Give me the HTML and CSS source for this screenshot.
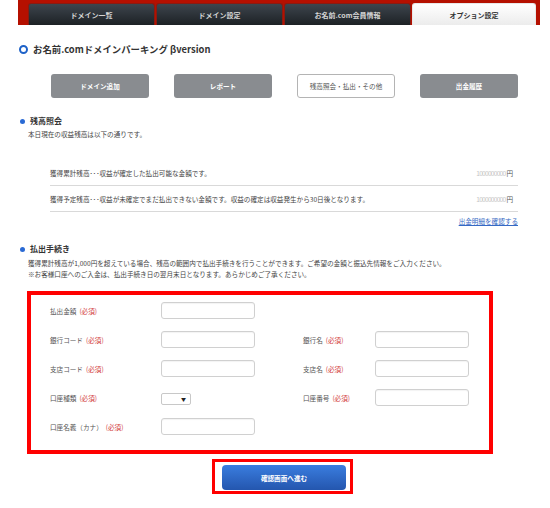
FILE: index.html
```html
<!DOCTYPE html>
<html lang="ja">
<head>
<meta charset="utf-8">
<title>お名前.comドメインパーキング</title>
<link rel="stylesheet" href="styles.css">
</head>
<body>
<div class="page">
  <div class="header">
    <nav class="tabs">
      <div class="tab">ドメイン一覧</div>
      <div class="tab">ドメイン設定</div>
      <div class="tab">お名前.com会員情報</div>
      <div class="tab active">オプション設定</div>
    </nav>
  </div>

  <h1 class="title"><span class="ring"></span>お名前.comドメインパーキング βversion</h1>

  <div class="subnav">
    <a class="sbtn">ドメイン追加</a>
    <a class="sbtn">レポート</a>
    <a class="sbtn current">残高照会・払出・その他</a>
    <a class="sbtn">出金履歴</a>
  </div>

  <section class="sec">
    <h2 class="sec-h"><span class="dot"></span>残高照会</h2>
    <p class="desc">本日現在の収益残高は以下の通りです。</p>
    <div class="balance">
      <div class="brow"><span>獲得累計残高･･･収益が確定した払出可能な金額です。</span><span class="val"><span class="num">1000000000</span>円</span></div>
      <div class="brow"><span>獲得予定残高･･･収益が未確定でまだ払出できない金額です。収益の確定は収益発生から30日後となります。</span><span class="val"><span class="num">1000000000</span>円</span></div>
    </div>
    <div class="linkrow"><a class="link">出金明細を確認する</a></div>
  </section>

  <section class="sec sec2">
    <h2 class="sec-h"><span class="dot"></span>払出手続き</h2>
    <p class="desc2">獲得累計残高が1,000円を超えている場合、残高の範囲内で払出手続きを行うことができます。ご希望の金額と振込先情報をご入力ください。<br>※お客様口座へのご入金は、払出手続き日の翌月末日となります。あらかじめご了承ください。</p>

    <form class="form">
      <label class="fl">払出金額<em>(必須)</em></label>
      <input class="inp" type="text">

      <label class="fl">銀行コード<em>(必須)</em></label>
      <input class="inp" type="text">
      <label class="rl">銀行名<em>(必須)</em></label>
      <input class="inp" type="text">

      <label class="fl">支店コード<em>(必須)</em></label>
      <input class="inp" type="text">
      <label class="rl">支店名<em>(必須)</em></label>
      <input class="inp" type="text">

      <label class="fl">口座種類<em>(必須)</em></label>
      <span class="select"><span class="arrow">▼</span></span>
      <label class="rl">口座番号<em>(必須)</em></label>
      <input class="inp" type="text">

      <label class="fl">口座名義（カナ）<em>(必須)</em></label>
      <input class="inp" type="text">
    </form>

    <div class="submit-frame">
      <button class="submit" type="button">確認画面へ進む</button>
    </div>
  </section>
</div>
</body>
</html>
```

FILE: styles.css
```css
* { box-sizing: border-box; }
html, body { margin: 0; padding: 0; background: #fff; }
body {
  font-family: "Noto Sans CJK JP", "Noto Sans", sans-serif;
  color: #444;
  font-size: 6.6px;
}
.page { width: 550px; height: 508px; overflow: hidden; }

/* header tabs */
.header {
  margin-left: 18px;
  width: 522px;
  height: 25px;
  background: #b51000;
  padding: 3px 0 0 10px;
}
.tabs { display: flex; gap: 1px; height: 22px; }
.tab {
  width: 127px;
  height: 22px;
  border-radius: 3px 3px 0 0;
  background: linear-gradient(#3d454d, #1d2125);
  color: #d4d4d4;
  font-weight: bold;
  font-size: 7px;
  display: flex;
  align-items: center;
  justify-content: center;
  border: 1px solid #8a1a10;
  border-bottom: none;
}
.tab.active {
  width: 124px;
  background: linear-gradient(#ffffff, #ececec);
  color: #333;
  border-color: #e8e8e8;
}

/* title */
.title {
  margin: 17px 0 0 19px;
  height: 14px;
  line-height: 14px;
  font-size: 9.4px;
  font-weight: bold;
  color: #333;
  display: flex;
  align-items: center;
}
.ring {
  width: 9px;
  height: 9px;
  border: 2.5px solid #1e62c8;
  border-radius: 50%;
  margin-right: 5px;
}

/* subnav */
.subnav {
  margin: 18px 0 0 51px;
  display: flex;
  gap: 25px;
}
.sbtn {
  width: 98px;
  height: 24px;
  border-radius: 3px;
  background: #898c90;
  color: #fff;
  font-weight: bold;
  display: flex;
  align-items: center;
  justify-content: center;
}
.sbtn.current {
  background: #fff;
  border: 1px solid #b4b4b4;
  color: #555;
  font-weight: normal;
}

/* sections */
.sec { margin: 17px 0 0 0; }
.sec-h {
  margin: 0 0 0 20px;
  height: 12px;
  line-height: 12px;
  font-size: 8px;
  font-weight: bold;
  color: #333;
  display: flex;
  align-items: center;
}
.dot {
  width: 5px;
  height: 5px;
  border-radius: 50%;
  background: #2a6ad4;
  margin-right: 5px;
}
.desc {
  margin: 2px 0 0 28px;
  line-height: 10px;
  color: #444;
}

.balance { margin: 21px 32px 0 50px; }
.brow {
  height: 26px;
  border-bottom: 1px solid #d9d9d9;
  display: flex;
  align-items: center;
  justify-content: space-between;
  padding: 0 5px 0 0;
  color: #444;
}
.val { color: #555; }
.num { color: #c4c4c4; letter-spacing: -0.75px; margin-right: 1px; }

.linkrow {
  margin: 4px 32px 0 0;
  text-align: right;
  line-height: 10px;
}
.link { color: #3569c4; text-decoration: underline; }

.sec2 { margin-top: 17px; }
.desc2 {
  margin: 3px 0 0 28px;
  line-height: 11px;
  color: #444;
}

/* form */
.form {
  margin: 11px 0 0 27px;
  width: 466px;
  border: 4px solid #ff0000;
  padding: 7px 0 15px 19px;
  display: grid;
  grid-template-columns: 111px 94px 48px 72px 94px;
  row-gap: 12px;
  align-items: center;
}
.fl { grid-column: 1; color: #555; }
.rl { grid-column: 4; color: #555; }
.fl em, .rl em { font-style: normal; color: #d23a3a; margin-left: 3px; }
.inp {
  width: 94px;
  height: 17px;
  border: 1px solid #d0d0d0;
  border-radius: 3px;
  background: #fff;
  margin: 0;
  padding: 0;
  box-shadow: inset 0 1px 1px rgba(0,0,0,0.05);
}
.select {
  width: 30px;
  height: 12px;
  border: 1px solid #c8c8c8;
  border-radius: 2px;
  display: flex;
  align-items: center;
  justify-content: flex-end;
  padding-right: 4px;
  margin-top: 2px;
}
.arrow { font-size: 5px; color: #222; line-height: 1; }

.submit-frame {
  margin: 5px 0 0 212px;
  width: 141px;
  height: 35px;
  border: 3px solid #ff0000;
  padding: 3px 4px 1px 7px;
}
.submit {
  display: block;
  width: 124px;
  height: 25px;
  border: none;
  border-radius: 4px;
  background: linear-gradient(#3a7ddf, #2456ae);
  color: #fff;
  font-family: "Noto Sans CJK JP", sans-serif;
  font-size: 6.6px;
  font-weight: bold;
  padding: 0;
}
```
